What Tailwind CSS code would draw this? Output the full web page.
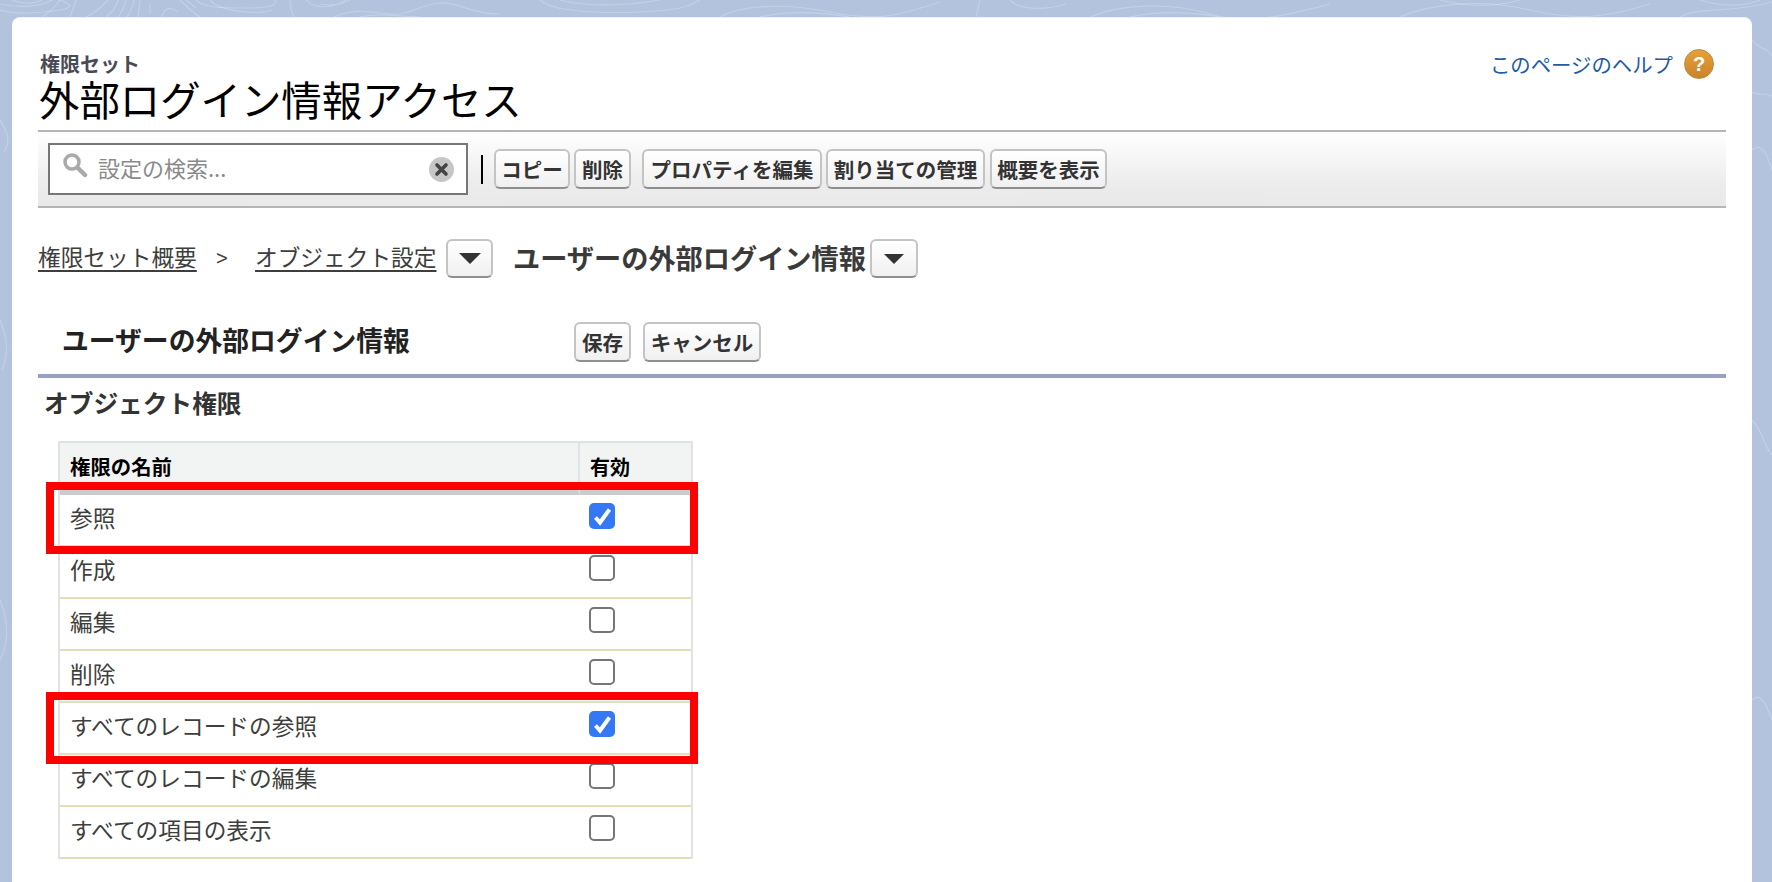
<!DOCTYPE html>
<html lang="ja">
<head>
    <meta charset="UTF-8">
    <meta name="viewport" content="width=device-width, initial-scale=1.0">
    <title>外部ログイン情報アクセス</title>
    <script src="https://cdn.jsdelivr.net/npm/@tailwindcss/browser@4"></script>
</head>
<body class="relative w-[1772px] h-[882px] overflow-hidden bg-[#b3c3dd] font-['Noto_Sans_CJK_JP',sans-serif] text-[#3e3e3c]">
    <!-- topo lines of the page background -->
    <svg class="absolute inset-0" width="1772" height="882" fill="none" stroke="#ffffff" stroke-opacity="0.22" stroke-width="1.2">
        <path d="M0 10C16 15 40 13 60 10S62 0 58 0"/>
        <path d="M0 4C20 8 40 7 52 0"/>
        <path d="M12 0C20 4 36 4 42 0"/>
        <path d="M60 0C56 6 50 12 42 17"/>
        <path d="M76 0L70 17"/>
        <path d="M108 0C100 8 96 12 86 17"/>
        <path d="M118 0C116 8 112 12 106 17M126 0C124 8 122 12 118 17M134 0C133 8 130 12 127 17M140 0L138 17M150 4L150 14"/>
        <path d="M162 17C164 8 170 6 178 12"/>
        <path d="M180 0C186 6 192 12 200 17M186 0L196 8"/>
        <path d="M196 0C204 8 222 8 246 8S276 6 276 0"/>
        <path d="M210 0C220 12 260 15 272 10"/>
        <path d="M290 0C290 8 292 12 294 17"/>
        <path d="M306 0C312 8 330 10 346 0M320 4C330 6 340 5 350 0"/>
        <path d="M334 17C354 8 370 12 390 14S420 4 440 3S470 14 500 14"/>
        <path d="M360 17C380 12 400 17 420 17"/>
        <path d="M540 0C550 10 590 14 640 12S690 4 700 0"/>
        <path d="M560 0C580 6 620 7 660 0"/>
        <path d="M720 17C740 6 780 2 830 12S900 15 940 2"/>
        <path d="M760 17C790 10 820 12 850 17"/>
        <path d="M980 0L976 17M1010 0C1016 8 1040 12 1066 4"/>
        <path d="M1090 17C1120 4 1170 2 1210 14S1290 14 1330 4"/>
        <path d="M1130 17C1160 10 1190 12 1220 17"/>
        <path d="M1400 17C1430 4 1480 -2 1530 10S1610 16 1650 4"/>
        <path d="M1440 0C1470 8 1500 6 1520 0"/>
        <path d="M1680 17C1700 6 1730 14 1772 2M1700 0C1720 6 1740 8 1760 0"/>
        <path d="M0 120C6 130 12 140 4 152M0 320C6 335 10 350 2 370M0 600C8 620 10 640 0 660"/>
        <path d="M1752 40C1760 50 1768 48 1772 56M1752 150C1764 140 1768 160 1772 170M1752 92C1758 96 1764 92 1772 96"/>
        <path d="M1752 420C1762 430 1766 450 1772 455M1752 700C1762 690 1768 710 1772 720"/>
    </svg>

    <main class="relative ml-[12px] mt-[17px] w-[1740px] h-[865px] bg-white border-t border-[#f0f0f0] rounded-t-[8px] px-[26px]">
        <header class="flex justify-between h-[112px] pt-[34px] pl-[1px]">
            <div>
                <div class="h-[24px] pl-[1px] leading-[24px] text-[20px] font-bold text-[#4a4a56]">権限セット</div>
                <h1 class="h-[46px] leading-[46px] text-[40.4px] font-normal text-black">外部ログイン情報アクセス</h1>
            </div>
            <a href="#" class="flex items-start gap-[11px] -mt-[3px] text-[20.4px] leading-[30px] text-[#1f5aa6] -mr-[-12px] h-[30px]">
                <span>このページのヘルプ</span>
                <span class="w-[30px] h-[30px] rounded-full bg-gradient-to-b from-[#e8a038] to-[#c9842a] border border-[#b98a45] text-white font-bold text-[20px] leading-[28px] text-center font-['Liberation_Sans',sans-serif]">?</span>
            </a>
        </header>

        <div class="flex items-center h-[78px] border-y-2 border-[#b5b5b5] bg-gradient-to-b from-white via-[#ececec] via-70% to-[#e9e9e9]">
            <div class="flex items-center ml-[10px] w-[420px] h-[52px] bg-white border-2 border-[#777777]">
                <svg class="ml-[12px] mb-[8px]" width="26" height="26" viewBox="0 0 26 26" fill="none" stroke="#a9a9a9">
                    <circle cx="10" cy="10" r="7" stroke-width="3.5"/>
                    <path d="M15.5 15.5L23 23" stroke-width="4.5" stroke-linecap="round"/>
                </svg>
                <span class="ml-[10px] mb-[4px] flex-1 text-[22px] leading-[30px] text-[#8a8a8a]">設定の検索...</span>
                <span class="flex items-center justify-center w-[25px] h-[25px] mr-[12px] rounded-full bg-[#c6c6c6]">
                    <svg width="15" height="15" viewBox="0 0 15 15" stroke="#444444" stroke-width="3.6" stroke-linecap="round"><path d="M3 3L12 12M12 3L3 12"/></svg>
                </span>
            </div>
            <div class="ml-[13px] w-[2px] h-[29px] bg-black"></div>
            <button class="ml-[11px] w-[76px] h-[40px] border-2 border-[#c4c4c4] border-b-[#8f8f8f] rounded-[6px] bg-gradient-to-b from-white to-[#f0f0f0] text-[20.5px] leading-[34px] font-bold text-[#333333] whitespace-nowrap">コピー</button>
            <button class="ml-[4px] w-[57px] h-[40px] border-2 border-[#c4c4c4] border-b-[#8f8f8f] rounded-[6px] bg-gradient-to-b from-white to-[#f0f0f0] text-[20.5px] leading-[34px] font-bold text-[#333333] whitespace-nowrap">削除</button>
            <button class="ml-[11px] w-[180px] h-[40px] border-2 border-[#c4c4c4] border-b-[#8f8f8f] rounded-[6px] bg-gradient-to-b from-white to-[#f0f0f0] text-[20.5px] leading-[34px] font-bold text-[#333333] whitespace-nowrap">プロパティを編集</button>
            <button class="ml-[4px] w-[159px] h-[40px] border-2 border-[#c4c4c4] border-b-[#8f8f8f] rounded-[6px] bg-gradient-to-b from-white to-[#f0f0f0] text-[20.5px] leading-[34px] font-bold text-[#333333] whitespace-nowrap">割り当ての管理</button>
            <button class="ml-[5px] w-[117px] h-[40px] border-2 border-[#c4c4c4] border-b-[#8f8f8f] rounded-[6px] bg-gradient-to-b from-white to-[#f0f0f0] text-[20.5px] leading-[34px] font-bold text-[#333333] whitespace-nowrap">概要を表示</button>
        </div>

        <nav class="flex items-center h-[39px] mt-[31px] text-[22.7px] leading-[30px] text-[#3e3e3c]">
            <a href="#" class="mb-[4px] underline underline-offset-[4px] decoration-2 w-[159px] whitespace-nowrap">権限セット概要</a>
            <span class="ml-[19px] mb-[2px] w-[39px] font-['Liberation_Sans',sans-serif] text-[20px]">&gt;</span>
            <a href="#" class="mb-[4px] underline underline-offset-[4px] decoration-2 w-[180px] whitespace-nowrap">オブジェクト設定</a>
            <button class="flex items-center justify-center ml-[11px] w-[47px] h-[39px] border-2 border-[#c4c4c4] border-b-[#8f8f8f] rounded-[6px] bg-gradient-to-b from-white to-[#f0f0f0]">
                <svg width="22" height="11" viewBox="0 0 22 11" fill="#333333"><path d="M0 0H22L11 11Z"/></svg>
            </button>
            <span class="ml-[20px] mb-[4px] w-[354px] text-[27.2px] font-bold text-[#3a3a3a] whitespace-nowrap">ユーザーの外部ログイン情報</span>
            <button class="flex items-center justify-center ml-[3px] w-[48px] h-[39px] border-2 border-[#c4c4c4] border-b-[#8f8f8f] rounded-[6px] bg-gradient-to-b from-white to-[#f0f0f0]">
                <svg width="20" height="10" viewBox="0 0 20 10" fill="#333333"><path d="M0 0H20L10 10Z"/></svg>
            </button>
        </nav>

        <section class="flex items-center h-[40px] mt-[44px]">
            <h2 class="w-[536px] pl-[24px] mb-[4px] text-[26.8px] leading-[36px] font-bold text-[#222222]">ユーザーの外部ログイン情報</h2>
            <button class="w-[57px] h-[40px] border-2 border-[#c4c4c4] border-b-[#8f8f8f] rounded-[6px] bg-gradient-to-b from-white to-[#f0f0f0] text-[20.5px] leading-[34px] font-bold text-[#333333] whitespace-nowrap">保存</button>
            <button class="ml-[12px] w-[118px] h-[40px] border-2 border-[#c4c4c4] border-b-[#8f8f8f] rounded-[6px] bg-gradient-to-b from-white to-[#f0f0f0] text-[20.5px] leading-[34px] font-bold text-[#333333] whitespace-nowrap">キャンセル</button>
        </section>
        <div class="h-[4px] mt-[12px] bg-[#96a3c0]"></div>

        <h3 class="mt-[9px] pl-[6px] text-[24.7px] leading-[30px] font-bold text-[#333333]">オブジェクト権限</h3>

        <table class="mt-[24px] ml-[20px] w-[635px] table-fixed border-separate border-spacing-0 border-x-2 border-t-2 border-[#e0e3e5] text-[22.7px]">
            <thead>
                <tr>
                    <th class="w-[520px] h-[52px] pl-[10px] text-left align-middle bg-[#f2f3f3] border-r-2 border-r-[#e0e3e5] border-b-[5px] border-b-[#cccccc] text-[20.4px] font-bold text-black">権限の名前</th>
                    <th class="h-[52px] pl-[10px] text-left align-middle bg-[#f2f3f3] border-b-[5px] border-b-[#cccccc] text-[20px] font-bold text-black">有効</th>
                </tr>
            </thead>
            <tbody>
                <tr>
                    <td class="h-[52px] pl-[10px] pb-[4px] border-b-2 border-[#e3deb8]">参照</td>
                    <td class="h-[52px] pl-[9px] pt-[8px] align-top border-b-2 border-[#e3deb8]">
                        <span class="block w-[26px] h-[26px] rounded-[5px] bg-[#3478f6]"><svg width="26" height="26" viewBox="0 0 26 26" fill="none" stroke="#ffffff" stroke-width="4"><path d="M6.5 14.5L11 19.5L20.5 6.5"/></svg></span>
                    </td>
                </tr>
                <tr>
                    <td class="h-[52px] pl-[10px] pb-[4px] border-b-2 border-[#e3deb8]">作成</td>
                    <td class="h-[52px] pl-[9px] pt-[8px] align-top border-b-2 border-[#e3deb8]"><span class="block w-[26px] h-[26px] rounded-[5px] bg-white border-2 border-[#767676]"></span></td>
                </tr>
                <tr>
                    <td class="h-[52px] pl-[10px] pb-[4px] border-b-2 border-[#e3deb8]">編集</td>
                    <td class="h-[52px] pl-[9px] pt-[8px] align-top border-b-2 border-[#e3deb8]"><span class="block w-[26px] h-[26px] rounded-[5px] bg-white border-2 border-[#767676]"></span></td>
                </tr>
                <tr>
                    <td class="h-[52px] pl-[10px] pb-[4px] border-b-2 border-[#e3deb8]">削除</td>
                    <td class="h-[52px] pl-[9px] pt-[8px] align-top border-b-2 border-[#e3deb8]"><span class="block w-[26px] h-[26px] rounded-[5px] bg-white border-2 border-[#767676]"></span></td>
                </tr>
                <tr>
                    <td class="h-[52px] pl-[10px] pb-[4px] border-b-2 border-[#e3deb8]">すべてのレコードの参照</td>
                    <td class="h-[52px] pl-[9px] pt-[8px] align-top border-b-2 border-[#e3deb8]">
                        <span class="block w-[26px] h-[26px] rounded-[5px] bg-[#3478f6]"><svg width="26" height="26" viewBox="0 0 26 26" fill="none" stroke="#ffffff" stroke-width="4"><path d="M6.5 14.5L11 19.5L20.5 6.5"/></svg></span>
                    </td>
                </tr>
                <tr>
                    <td class="h-[52px] pl-[10px] pb-[4px] border-b-2 border-[#e3deb8]">すべてのレコードの編集</td>
                    <td class="h-[52px] pl-[9px] pt-[8px] align-top border-b-2 border-[#e3deb8]"><span class="block w-[26px] h-[26px] rounded-[5px] bg-white border-2 border-[#767676]"></span></td>
                </tr>
                <tr>
                    <td class="h-[52px] pl-[10px] pb-[4px] border-b-2 border-[#e3deb8]">すべての項目の表示</td>
                    <td class="h-[52px] pl-[9px] pt-[8px] align-top border-b-2 border-[#e3deb8]"><span class="block w-[26px] h-[26px] rounded-[5px] bg-white border-2 border-[#767676]"></span></td>
                </tr>
            </tbody>
        </table>
    </main>

    <!-- red annotation boxes over the table -->
    <div class="absolute left-[46px] top-[482px] w-[652px] h-[72px] border-[8px] border-[#ff0000]"></div>
    <div class="absolute left-[46px] top-[692px] w-[652px] h-[72px] border-[8px] border-[#ff0000]"></div>
</body>
</html>
